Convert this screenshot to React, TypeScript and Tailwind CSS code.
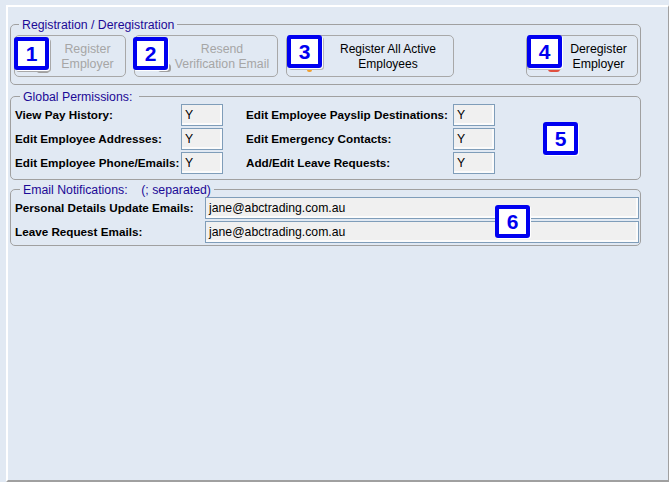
const FONT = "font-['Liberation_Sans',Arial,sans-serif]";

const Badge = ({ n, className }: { n: number; className: string }) => (
  <div
    className={`absolute z-10 flex h-[33px] w-[35px] items-center justify-center rounded-[3px] border-[4px] border-[#0000f0] bg-white text-[21px] leading-none font-bold text-[#0000f0] ${className}`}
  >
    {n}
  </div>
);

const Group = ({ title, className, children }: { title: string; className: string; children: React.ReactNode }) => (
  <fieldset className={`rounded-[5px] border border-[#a0a0a0] ${className}`}>
    <legend className="ml-[5px] translate-y-[1px] px-[3px] text-[12.3px] leading-[13px] whitespace-pre text-[#1c0a96]">
      {title}
    </legend>
    {children}
  </fieldset>
);

const ActionButton = ({
  lines,
  disabled,
  dot,
  className,
  textClass,
}: {
  lines: string[];
  disabled?: boolean;
  dot: string;
  className: string;
  textClass: string;
}) => (
  <button
    className={`relative h-[42px] rounded-[5px] border border-[#a8a8a8] leading-[15px] ${
      disabled ? "text-[#a6a6a6]" : "text-black"
    } ${className}`}
  >
    <span className={`block pt-[1px] text-center ${textClass}`}>
      {lines.map((l) => (
        <span key={l} className="block whitespace-nowrap">
          {l}
        </span>
      ))}
    </span>
    {/* icon stub peeking out from behind the badge */}
    <span className={`absolute ${dot}`} />
  </button>
);

const Field = ({ value, className }: { value: string; className: string }) => (
  <div
    className={`flex h-[22px] items-center border border-[#7f9db9] bg-[#f0f0f0] pl-[3px] text-[12.25px] text-black shadow-[inset_-2px_-2px_0_#fbfbfb] ${className}`}
  >
    {value}
  </div>
);

const Label = ({ children, className = "" }: { children: React.ReactNode; className?: string }) => (
  <span className={`text-[11.7px] font-bold whitespace-nowrap text-black ${className}`}>{children}</span>
);

export default function App() {
  return (
    <div className={`h-[482px] w-[669px] overflow-hidden bg-[#e1e9f3] pt-[5px] pl-[6px] ${FONT}`}>
      <div className="relative h-[477px] w-[663px] border-t-2 border-r border-b-2 border-l-2 border-t-white border-r-[#a0a0a0] border-b-[#a0a0a0] border-l-white pt-[11px] pr-[27px] pl-[2px]">
        <Group title="Registration / Deregistration" className="h-[67px] pt-[4px] pl-[3px]">
          <div className="flex">
            <ActionButton
              lines={["Register", "Employer"]}
              disabled
              dot="bottom-[3px] left-[22px] h-[2px] w-[12px] rounded-b-[2px] bg-[#a0a0a0]"
              className="w-[112px]"
              textClass="pl-[35px] text-[12.4px]"
            />
            <ActionButton
              lines={["Resend", "Verification Email"]}
              disabled
              dot="bottom-[4px] left-[23px] h-[8px] w-[13px] rounded-[3px] bg-[#a0a0a0]"
              className="ml-[8px] w-[144px]"
              textClass="pl-[32px] text-[12.3px]"
            />
            <ActionButton
              lines={["Register All Active", "Employees"]}
              dot="bottom-[4px] left-[20px] h-[3px] w-[5px] rounded-b-[2px] bg-[#f0a030]"
              className="ml-[8px] w-[168px]"
              textClass="pl-[36px] text-[12px]"
            />
            <ActionButton
              lines={["Deregister", "Employer"]}
              dot="bottom-[4px] left-[21px] h-[3px] w-[12px] rounded-b-full bg-[#e05040]"
              className="ml-[72px] w-[112px]"
              textClass="pl-[33px] text-[12.3px]"
            />
          </div>
        </Group>

        <Group title="Global Permissions: " className="mt-[5px] h-[90px] pt-[1px] pl-[4px]">
          <div className="grid grid-cols-[166px_65px_207px_42px] items-center gap-y-[2px]">
            <Label>View Pay History:</Label>
            <Field value="Y" className="w-[42px]" />
            <Label>Edit Employee Payslip Destinations:</Label>
            <Field value="Y" className="w-[42px]" />
            <Label>Edit Employee Addresses:</Label>
            <Field value="Y" className="w-[42px]" />
            <Label>Edit Emergency Contacts:</Label>
            <Field value="Y" className="w-[42px]" />
            <Label>Edit Employee Phone/Emails:</Label>
            <Field value="Y" className="w-[42px]" />
            <Label>Add/Edit Leave Requests:</Label>
            <Field value="Y" className="w-[42px]" />
          </div>
        </Group>

        <Group title={"Email Notifications:    (; separated)"} className="mt-[3px] h-[63px] pt-[1px] pl-[4px]">
          <div className="grid grid-cols-[190px_434px] items-center gap-y-[2px]">
            <Label>Personal Details Update Emails:</Label>
            <Field value="jane@abctrading.com.au" className="w-[434px]" />
            <Label>Leave Request Emails:</Label>
            <Field value="jane@abctrading.com.au" className="w-[434px]" />
          </div>
        </Group>

        <Badge n={1} className="top-[30px] left-[6px] shadow-[1px_1px_0_#ffffff,2px_2px_0_#a8a8a8]" />
        <Badge n={2} className="top-[30px] left-[125px] shadow-[1px_1px_0_#ffffff]" />
        <Badge n={3} className="top-[28px] left-[279px] shadow-[1px_1px_0_#ffffff,2px_2px_0_#b8b8b8]" />
        <Badge n={4} className="top-[28px] left-[519px] shadow-[1px_1px_0_#ffffff,0_2px_0_#c0c0c0]" />
        <Badge n={5} className="top-[115px] left-[535px] shadow-[1px_1px_0_#ffffff]" />
        <Badge n={6} className="top-[198px] left-[487px] shadow-[1px_1px_0_#ffffff]" />
      </div>
    </div>
  );
}
